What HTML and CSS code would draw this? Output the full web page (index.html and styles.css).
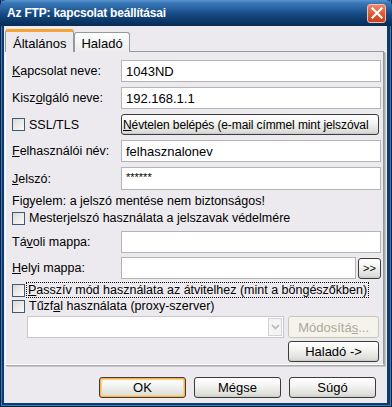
FILE: index.html
```html
<!DOCTYPE html>
<html lang="hu">
<head>
    <meta charset="UTF-8">
    <title>Az FTP: kapcsolat beállításai</title>
    <link rel="stylesheet" href="styles.css">
</head>
<body>
<div class="window">
    <div class="titlebar">
        <span class="title">Az FTP: kapcsolat beállításai</span>
        <span class="close">
            <svg width="12" height="12" viewBox="0 0 12 12"><path d="M1.5 1.5 L10.5 10.5 M10.5 1.5 L1.5 10.5" stroke="#fff" stroke-width="2.2" stroke-linecap="square"/></svg>
        </span>
    </div>
    <div class="client">
        <div class="tabs">
            <div class="tab active">Általános</div>
            <div class="tab">Haladó</div>
        </div>
        <div class="panel">
            <div class="row r1">
                <label class="lbl"><u>K</u>apcsolat neve:</label>
                <div class="input">1043ND</div>
            </div>
            <div class="row r2">
                <label class="lbl">Kisz<u>o</u>lgáló neve:</label>
                <div class="input">192.168.1.1</div>
            </div>
            <div class="row r3">
                <div class="lbl check"><span class="box"></span>SSL/TLS</div>
                <div class="btn wide"><span class="clip"><u>N</u>évtelen belépés (e-mail címmel mint jelszóval</span></div>
            </div>
            <div class="row r4">
                <label class="lbl"><u>F</u>elhasználói név:</label>
                <div class="input">felhasznalonev</div>
            </div>
            <div class="row r5">
                <label class="lbl"><u>J</u>elszó:</label>
                <div class="input pass">******</div>
            </div>
            <div class="row r6 note">Figyelem: a jelszó mentése nem biztonságos!</div>
            <div class="row r7 check"><span class="box"></span>Mester<u>j</u>elszó használata a jelszavak védelmére</div>
            <div class="row r8">
                <label class="lbl">Tá<u>v</u>oli mappa:</label>
                <div class="input"></div>
            </div>
            <div class="row r9">
                <label class="lbl"><u>H</u>elyi mappa:</label>
                <div class="input"></div>
                <div class="btn small">&gt;&gt;</div>
            </div>
            <div class="row r10 check"><span class="box"></span><span class="focus"><u>P</u>asszív mód használata az átvitelhez (mint a böngészőkben)</span></div>
            <div class="row r11 check"><span class="box"></span>Tűzf<u>a</u>l használata (proxy-szerver)</div>
            <div class="row r12">
                <div class="combo">
                    <span class="combo-arrow">
                        <svg width="9" height="6" viewBox="0 0 9 6"><path d="M1 1 L4.5 4.5 L8 1" fill="none" stroke="#b8b8b8" stroke-width="1.6"/></svg>
                    </span>
                </div>
                <div class="btn side disabled">Módosítá<u>s</u>...</div>
            </div>
            <div class="row r13">
                <div class="btn side">Haladó -&gt;</div>
            </div>
        </div>
        <div class="actions">
            <div class="btn action default">OK</div>
            <div class="btn action">Mégse</div>
            <div class="btn action">Súgó</div>
        </div>
    </div>
</div>
</body>
</html>
```

FILE: styles.css
```css
html, body {
    margin: 0;
    padding: 0;
    font-family: "Liberation Sans", Arial, sans-serif;
    font-size: 12.5px;
    color: #000;
    background: #0c3464;
}

u {
    text-decoration: underline;
    text-underline-offset: 1px;
}

.window {
    width: 392px;
    height: 407px;
    box-sizing: border-box;
    background: #0f3a6c;
    box-shadow: inset 1px 0 #06203f, inset -1px 0 #06203f, inset 0 -1px #06203f,
                inset 2px 0 #3b7cc0, inset -2px 0 #3b7cc0, inset 0 -2px #3b7cc0;
    display: flex;
    flex-direction: column;
}

.titlebar {
    height: 26px;
    display: flex;
    align-items: center;
    justify-content: space-between;
    padding: 0 6px 0 7px;
    background: linear-gradient(#5b95cf 0, #3a78b8 3px, #2a64a2 8px, #164a84 14px, #0d3a6c 20px, #072a55 26px);
    border-radius: 6px 6px 0 0;
}

.title {
    color: #fff;
    font-size: 12px;
    font-weight: bold;
    letter-spacing: -0.2px;
}

.close {
    width: 19px;
    height: 19px;
    box-sizing: border-box;
    border: 1px solid #f0c0b0;
    border-radius: 3px;
    background: linear-gradient(#f0876a, #e05a35 50%, #c8401c);
    display: flex;
    align-items: center;
    justify-content: center;
}

.client {
    flex: 1;
    margin: 0 5px 4px 4px;
    background: #eceaee;
    display: flex;
    flex-direction: column;
}

.tabs {
    display: flex;
    align-items: flex-end;
    height: 26px;
    padding-left: 1px;
    position: relative;
    z-index: 1;
    margin-bottom: -1px;
}

.tab {
    height: 20px;
    box-sizing: border-box;
    padding: 3px 6px 0 6px;
    border: 1px solid #919b9c;
    border-bottom: none;
    border-radius: 3px 3px 0 0;
    background: linear-gradient(#ffffff, #ececec);
    font-size: 13px;
}

.tab.active {
    height: 23px;
    padding: 4px 7px 0 7px;
    border-top: 3px solid #f5a332;
    background: #eceaee;
}

.panel {
    width: 379px;
    height: 314px;
    box-sizing: border-box;
    margin-left: 1px;
    border: 1px solid #919b9c;
    border-left-color: #fff;
    border-bottom-color: #fff;
    box-shadow: 1px 1px 0 #a8a8a8, 2px 2px 0 #c8c8c8;
    padding: 8px 2px 0 6px;
    display: flex;
    flex-direction: column;
}

.row {
    display: flex;
    align-items: center;
    flex-shrink: 0;
}

.r1 { height: 22px; }
.r2 { height: 22px; margin-top: 5px; }
.r3 { height: 21px; margin-top: 5px; }
.r4 { height: 22px; margin-top: 5px; }
.r5 { height: 23px; margin-top: 5px; }
.r6 { height: 14px; margin-top: 4px; }
.r7 { height: 14px; margin-top: 3px; }
.r8 { height: 22px; margin-top: 6px; }
.r9 { height: 22px; margin-top: 4px; }
.r10 { height: 14px; margin-top: 4px; }
.r11 { height: 14px; margin-top: 2px; }
.r12 { height: 22px; margin-top: 3px; padding-left: 15px; }
.r13 { height: 21px; margin-top: 3px; justify-content: flex-end; }

.lbl {
    width: 109px;
    flex-shrink: 0;
}

.input {
    flex: 1;
    height: 100%;
    box-sizing: border-box;
    border: 1px solid #b4b4b4;
    background: #fff;
    padding: 0 4px;
    display: flex;
    align-items: center;
    font-size: 13px;
}

.input.pass {
    align-items: flex-start;
    padding-top: 3px;
    font-size: 11px;
}

.check {
    display: flex;
    align-items: center;
}

.box {
    width: 13px;
    height: 13px;
    box-sizing: border-box;
    border: 1px solid #3d5a78;
    background: linear-gradient(135deg, #dcdad5, #fbfbf9);
    margin-right: 4px;
    flex-shrink: 0;
}

.focus {
    outline: 1px dotted #000;
    outline-offset: 0;
    padding: 0 1px;
    margin-left: -2px;
}

.btn {
    box-sizing: border-box;
    border: 1px solid #3c3c3c;
    border-radius: 3px;
    background: linear-gradient(#ffffff, #f4f4f2 40%, #dcdcd8 90%, #c8c8c4);
    display: flex;
    align-items: center;
    justify-content: center;
    font-size: 13px;
    white-space: nowrap;
}

.btn.wide {
    flex: 1;
    height: 100%;
    margin-right: 2px;
    justify-content: flex-start;
    overflow: hidden;
    font-size: 12px;
    letter-spacing: -0.1px;
}

.clip {
    padding-left: 1px;
}

.btn.small {
    width: 23px;
    height: 21px;
    margin-left: 2px;
    font-size: 11px;
}

.btn.side {
    width: 91px;
    height: 21px;
    margin-right: 2px;
}

.combo {
    width: 258px;
    height: 100%;
    box-sizing: border-box;
    border: 1px solid #c8c8c8;
    background: #fff;
    display: flex;
    justify-content: flex-end;
    padding: 1px;
    margin-right: 4px;
}

.combo-arrow {
    width: 14px;
    box-sizing: border-box;
    border: 1px solid #d4d4d4;
    background: #f4f4f4;
    display: flex;
    align-items: center;
    justify-content: center;
}

.btn.disabled {
    height: 100%;
    border-color: #c9c7ba;
    background: #f5f4ea;
    color: #aca899;
}

.actions {
    display: flex;
    gap: 8px;
    margin-top: 12px;
    padding-left: 95px;
}

.btn.action {
    width: 87px;
    height: 21px;
}

.btn.default {
    box-shadow: inset 0 0 0 1px #f8b449, inset 0 0 0 2px #fcd08a;
}
```
